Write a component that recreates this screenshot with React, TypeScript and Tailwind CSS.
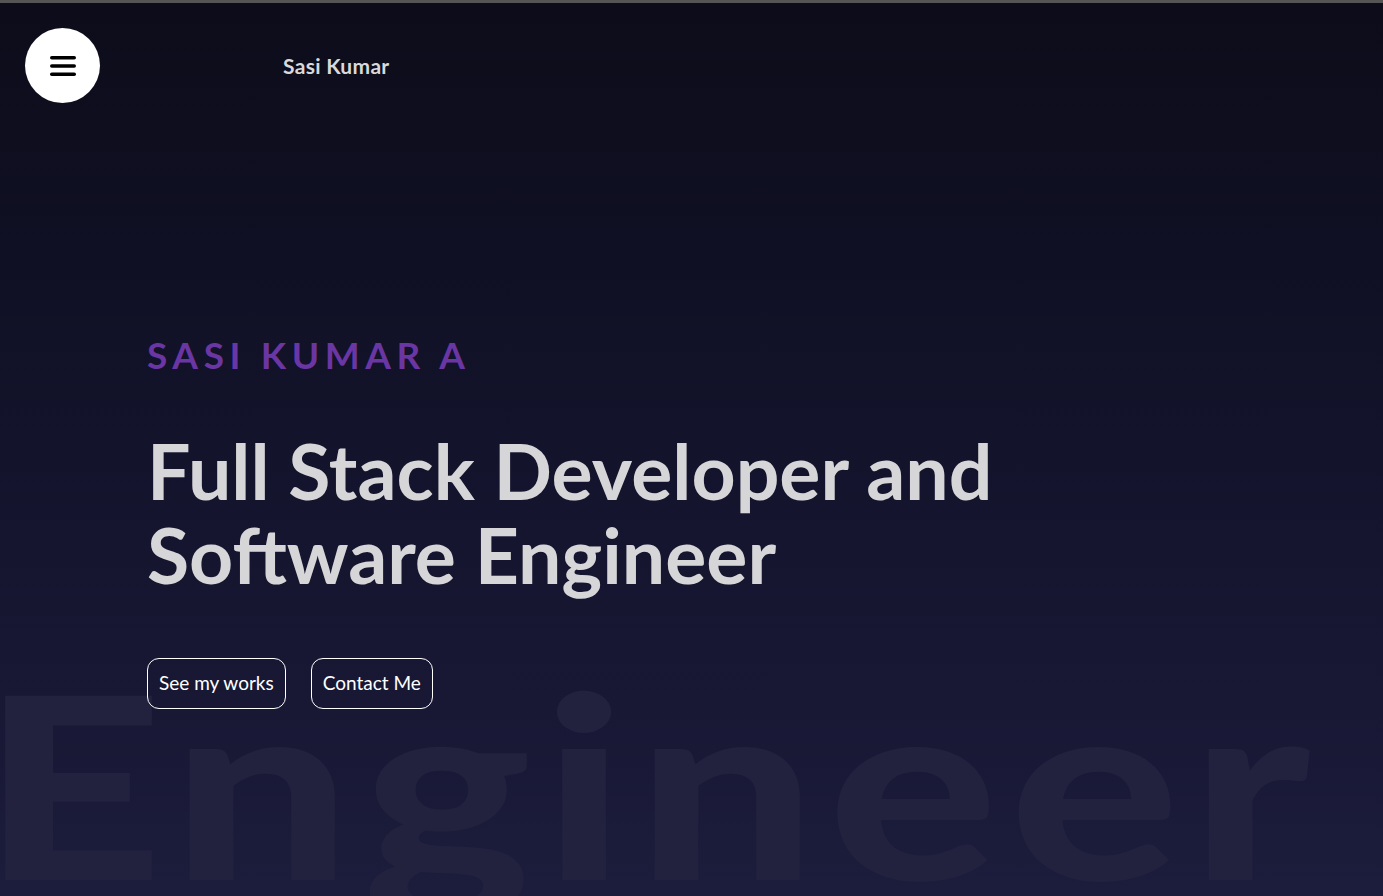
import { useState } from 'react'

export default function App() {
  const [open, setOpen] = useState(false)

  return (
    <div
      className="relative min-h-[896px] w-full overflow-hidden border-t-[3px] border-[#555555] bg-gradient-to-b from-[#0c0c1a] via-[#13132c] to-[#1c1c3c]"
      style={{ fontFamily: 'Lato, "Open Sans", sans-serif' }}
    >
      {/* Background word */}
      <div className="pointer-events-none absolute left-[-19px] top-[652px] origin-left scale-x-[1.25] select-none whitespace-nowrap text-[254px] font-black leading-none tracking-[9px] text-[#22223f]">
        Engineer
      </div>

      {/* Header */}
      <header className="relative flex items-center pl-[25px] pt-[25px]">
        <button
          onClick={() => setOpen(!open)}
          className="flex h-[75px] w-[75px] items-center justify-center rounded-full bg-white"
        >
          <svg width="28" height="22" viewBox="0 0 28 22">
            <rect x="1" y="1" width="26" height="3.5" rx="1.75" fill="#000" />
            <rect x="1" y="9.25" width="26" height="3.5" rx="1.75" fill="#000" />
            <rect x="1" y="17.5" width="26" height="3.5" rx="1.75" fill="#000" />
          </svg>
        </button>
        <span className="ml-[183px] text-[21px] font-bold tracking-[0.3px] text-[#d9d9db]">Sasi Kumar</span>
      </header>

      {/* Hero */}
      <section className="relative pl-[147px] pt-[233px]">
        <p className="text-[37px] font-bold uppercase leading-none tracking-[5.6px] text-[#6a36a3]">
          Sasi Kumar A
        </p>

        <h1 className="mt-[55px] text-[77px] font-bold leading-[84px] text-[#d6d6d8]">
          Full Stack Developer and
          <br />
          Software Engineer
        </h1>

        <div className="mt-[62px] flex gap-[25px]">
          <button className="h-[51px] rounded-[12px] border border-white px-[11px] text-[19px] text-white">
            See my works
          </button>
          <button className="h-[51px] rounded-[12px] border border-white px-[11px] text-[19px] text-white">
            Contact Me
          </button>
        </div>
      </section>
    </div>
  )
}
